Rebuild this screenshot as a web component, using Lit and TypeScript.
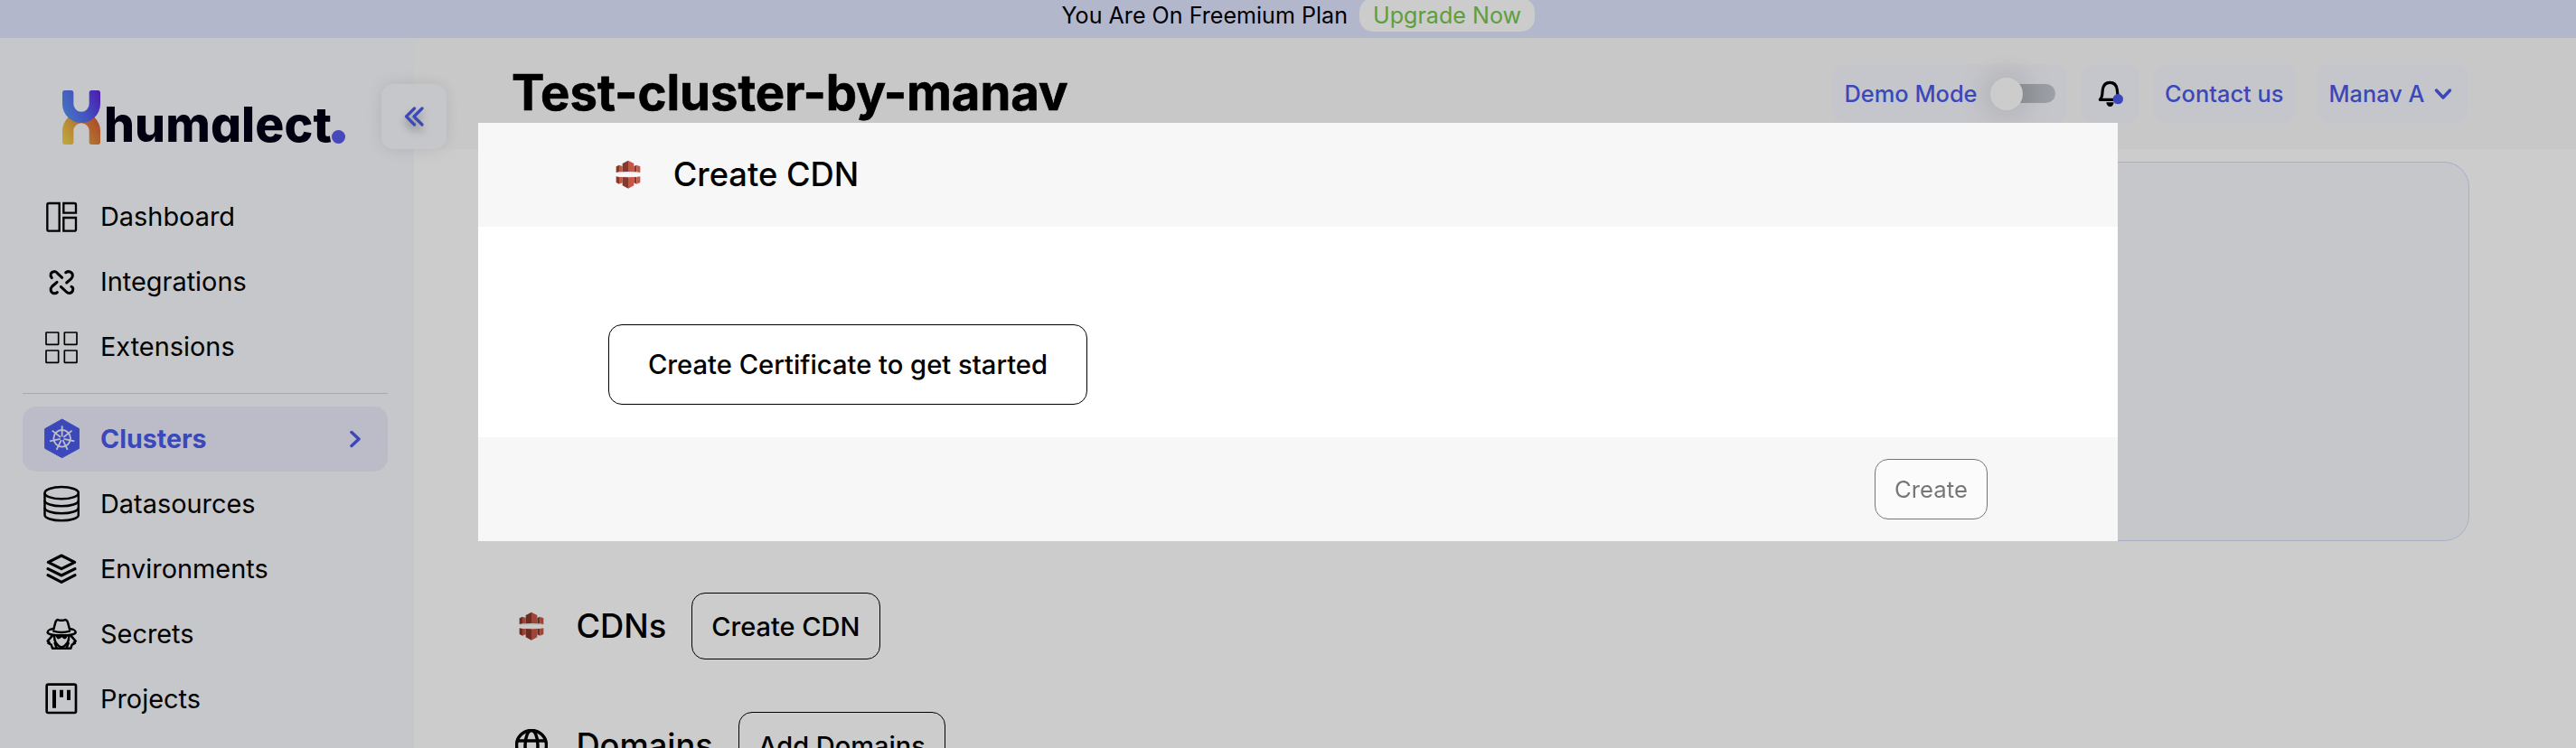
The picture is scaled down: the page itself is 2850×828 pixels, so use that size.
import { LitElement, html, css, svg, nothing } from 'lit';
import { customElement, property } from 'lit/decorators.js';

const navIcon = (y: number, body: unknown) =>
  html`<svg width="40" height="48" viewBox="24 ${y} 120 144" fill="none" stroke="#000">${body}</svg>`;

const wheelSpokes = Array.from({ length: 7 }, (_, i) => {
  const a = (i * 2 * Math.PI) / 7 - Math.PI / 2;
  return svg`<path d="M${86 + 6 * Math.cos(a)} ${91 + 6 * Math.sin(a)}L${86 + 42 * Math.cos(a)} ${91 + 42 * Math.sin(a)}"/>`;
});

const icons = {
  dashboard: navIcon(18, svg`<g stroke-width="7">
    <path d="M77 45V137H42Q37 137 37 132V50Q37 45 42 45Z"/>
    <path d="M91 45H127Q132 45 132 50V77H91Z"/>
    <path d="M91 93H132V132Q132 137 127 137H91Z"/></g>`),
  integrations: navIcon(234, svg`<g stroke-width="9" stroke-linecap="round" stroke-linejoin="round">
    <path d="M52 293C44 283 49 273 59 272C64 271 68 274 71 278L86 292"/>
    <path d="M98 275C109 268 121 274 121 285C121 290 119 293 116 296L101 309"/>
    <path d="M69 307L53 321C46 328 47 340 57 344C62 345 67 344 70 341"/>
    <path d="M82 322L100 339C107 346 121 345 122 332C123 327 120 323 117 322"/></g>`),
  extensions: navIcon(450, svg`<g stroke-width="5">
    <rect x="33" y="474" width="41" height="40" rx="1"/><rect x="94" y="474" width="41" height="40" rx="1"/>
    <rect x="33" y="534" width="41" height="40" rx="1"/><rect x="94" y="534" width="41" height="40" rx="1"/></g>`),
  clusters: navIcon(21, svg`<path d="M86 27L143 59V124L86 155L29 124V59Z" fill="#4a5be9" stroke="#4a5be9" stroke-width="3" stroke-linejoin="round"/>
    <g stroke="#ececfb" stroke-width="5.500"><circle cx="86" cy="91" r="28"/>${wheelSpokes}</g>`),
  datasources: navIcon(237, svg`<g stroke-width="7.500">
    <ellipse cx="84.500" cy="272" rx="56" ry="20"/>
    <path d="M28.500 272V345C28.500 356 54 364 84.500 364S140.500 356 140.500 345V272"/>
    <path d="M28.500 297C28.500 308 54 316 84.500 316S140.500 308 140.500 297"/>
    <path d="M28.500 321C28.500 332 54 340 84.500 340S140.500 332 140.500 321"/></g>`),
  environments: navIcon(453, svg`<g stroke-width="9.500" stroke-linejoin="round" stroke-linecap="round">
    <path d="M84 480L128 502L84 524L40 502Z"/><path d="M39 524L84 546L129 524"/><path d="M39 545L84 568L129 545"/></g>`),
  secrets: navIcon(669, svg`<g stroke-width="7.500" stroke-linejoin="round" stroke-linecap="round">
    <path d="M58 724L64 702C66 695 70 692 75 694C81 696 87 696 93 694C98 692 103 695 105 702L111 724"/>
    <path d="M57 724C48 724 38 728 38 735C38 741 56 745 84.500 745S131 741 131 735C131 728 121 724 112 724"/>
    <path d="M58 731C75 736 94 736 111 731"/>
    <path d="M54 746L38 764L44 769L40 771L50 776L54 788H115L119 776L129 771L125 769L131 764L115 746"/>
    <path d="M60 748C60 765 68 779 84.500 785C101 779 109 765 109 748"/>
    <path d="M62 771L68 787M107 771L101 787"/></g>
    <path d="M64 746H105L99 756Q92 760 85 751Q77 760 70 756Z" fill="#000" stroke="none"/>`),
  projects: navIcon(885, svg`<rect x="35" y="908" width="97" height="94" rx="5" stroke-width="8"/>
    <g fill="#000" stroke="none"><path d="M54 926H66V986H54ZM78 926H90V950H78ZM102 926H114V960H102Z"/></g>`),
};

const half = svg`
  <path fill="#85392c" d="M42 74L52 69V92L42 94Z"/><path fill="#c95546" d="M52 69L63 73V92L52 92Z"/>
  <path fill="#85392c" d="M101 73L110 69V92L101 92Z"/><path fill="#c95546" d="M110 69L122 74V94L110 92Z"/>
  <path fill="#85392c" d="M63 64L82 54V91L63 92Z"/><path fill="#c95546" d="M82 54L101 64V92L82 91Z"/>`;
const cdnIcon = html`<svg width="36" height="36" viewBox="28 46 108 108">
  <path fill="#ececec" d="M42 94L63 92H101L122 94V96H42ZM42 106H122V108H42Z"/>
  ${half}<g transform="matrix(1 0 0 -1 0 201)">${half}</g></svg>`;
const globeIcon = html`<svg width="36" height="36" viewBox="0 0 36 36" fill="none" stroke="#000" stroke-width="3.500">
  <circle cx="18" cy="18" r="16.500"/><ellipse cx="18" cy="18" rx="7" ry="16.500"/><path d="M3 13H33M3 23H33"/></svg>`;

@customElement('nav-item')
class NavItem extends LitElement {
  @property() label = '';
  @property({ type: Boolean, reflect: true }) active = false;
  @property({ attribute: false }) icon: unknown = nothing;
  static styles = css`
    :host { display: flex; align-items: center; height: 72px; padding: 0 30px 0 23px; border-radius: 15px; font-size: 28.9px; color: #000; box-sizing: border-box; }
    :host([active]) { background: #ececfb; color: #4a5be9; font-weight: 700; font-size: 28.6px; }
    .label { margin: 0 0 2px 23px; flex: 1; white-space: nowrap; }
    svg { display: block; }
  `;
  render() {
    return html`${this.icon}<span class="label">${this.label}</span>${this.active
      ? html`<svg width="12" height="20" viewBox="0 0 12 20" fill="none" stroke="#4a5be9" stroke-width="3.500" stroke-linecap="round" stroke-linejoin="round"><path d="M2 2.500L10 10L2 17.500"/></svg>`
      : nothing}`;
  }
}

@customElement('app-root')
class AppRoot extends LitElement {
  static styles = css`
    :host { display: block; position: relative; width: 2850px; height: 828px; overflow: hidden; background: #fff; color: #000; font-family: Inter, sans-serif; }
    * { box-sizing: border-box; }
    svg { display: block; flex: none; }
    button { font: inherit; color: inherit; margin: 0; white-space: nowrap; }
    .banner { display: flex; align-items: flex-start; height: 42px; padding-left: 1174.5px; background: #e0e5fe; font-size: 25.1px; line-height: 35px; white-space: nowrap; overflow: hidden; }
    .upgrade { display: grid; place-items: center; width: 194px; height: 37px; padding-top: 2px; margin: -2px 0 0 13px; border-radius: 15px; background: #fff; color: #76c74a; }
    .shell { display: flex; height: 786px; }
    .sidebar { width: 458px; padding: 58px 29px 0 25px; background: #f8f9fe; position: relative; }
    .logo { display: flex; height: 60px; margin: 0 0 44px 44px; align-items: flex-start; }
    .word { font-size: 53.5px; font-weight: 800; line-height: 60px; margin: 7.5px 0 0 4px; color: #010114; font-feature-settings: "cv11" 1; width: 250px; letter-spacing: 0.1px; }
    .dot { width: 15px; height: 15px; border-radius: 50%; background: #5a5ce8; margin: 43.5px 0 0 2px; }
    .collapse { position: absolute; left: 422px; top: 51px; width: 72px; height: 72px; border: 0; border-radius: 14px; background: #f8f9fe; box-shadow: 0 0 18px rgba(0,0,0,.1); display: grid; place-items: center; padding: 0; z-index: 1; }
    .collapse svg { filter: drop-shadow(0 6px 4px rgba(0,0,0,.3)); }
    .divider { height: 1px; background: #d2d3d9; margin: 15px 0 14px; }
    .main { flex: 1; min-width: 0; }
    .header { display: flex; align-items: center; height: 123px; padding: 0 119px 0 108px; background: #fbfbfb; }
    h1 { margin: 0 auto 3px 0; font-size: 54.4px; font-weight: 700; line-height: 66px; white-space: nowrap; -webkit-text-stroke: 0.7px #000; }
    .chip { display: flex; align-items: center; height: 65px; border-radius: 14px; background: #f7f8fe; color: #4a5be9; font-size: 25.4px; font-weight: 500; white-space: nowrap; }
    .demo { width: 260px; padding-left: 13.5px; }
    .switch { display: flex; align-items: center; width: 69px; height: 21px; margin-left: 17px; border-radius: 11px; background: linear-gradient(90deg, #b3babd 30%, #c5c8d2); }
    .thumb { flex: none; width: 36px; height: 36px; border-radius: 50%; background: #fff; box-shadow: 0 0 36px rgba(0,0,0,.22); margin-left: -3px; }
    .bell { width: 65px; margin-left: 15px; padding-left: 19px; }
    .contact { width: 158px; margin-left: 15px; padding-left: 13px; }
    .user { width: 167px; margin-left: 24px; padding-left: 12.5px; gap: 11px; font-size: 25.3px; }
    .content { padding: 14px 118px 0 109px; }
    .card { height: 420px; border: 1px solid #d3daf8; border-radius: 28px; background: #f8f9fe; margin-bottom: 57px; }
    .section { display: flex; align-items: center; height: 74px; margin: 0 0 58px 2.7px; }
    h2 { margin: 0; font-size: 36.3px; font-weight: 500; line-height: 44px; white-space: nowrap; }
    .section h2 { margin: 0 27.7px 0 31.7px; }
    .btn { border: 1px solid #000; border-radius: 15px; background: #fff; font-size: 29px; font-weight: 500; height: 74px; padding: 0 21.4px; }
    .backdrop { position: absolute; inset: 0; z-index: 2; background: rgba(0,0,0,.2); padding: 136px 0 0 529px; }
    .modal { width: 1814px; height: 463px; background: #fff; display: flex; flex-direction: column; }
    .m-head { display: flex; align-items: center; height: 115px; background: #f7f7f7; padding: 0 0 1px 147.7px; }
    .m-head h2 { margin-left: 32px; }
    .m-body { height: 233px; padding: 108px 0 0 144px; }
    .m-body .btn { width: 530px; height: 89px; font-size: 29.2px; padding: 0; }
    .m-foot { display: flex; align-items: center; justify-content: flex-end; height: 115px; background: #f7f7f7; padding-right: 144px; }
    .m-foot .btn { width: 125px; height: 67px; padding: 0 0 1px; opacity: .52; font-size: 25.7px; font-weight: 400; }
  `;

  render() {
    return html`
      <div class="banner"><span>You Are On Freemium Plan</span><span class="upgrade">Upgrade Now</span></div>
      <div class="shell">
        <nav class="sidebar">
          <div class="logo">
            <svg width="42" height="60" viewBox="87 60 126 180">
              <defs>
                <linearGradient id="b" x1="0" y1=".6" x2="1" y2=".2"><stop offset="0" stop-color="#5590f2"/><stop offset=".5" stop-color="#5566f0"/><stop offset="1" stop-color="#5d28df"/></linearGradient>
                <linearGradient id="o" x1="0" y1=".2" x2="1" y2=".7"><stop offset="0" stop-color="#edd04b"/><stop offset=".5" stop-color="#e2963b"/><stop offset="1" stop-color="#d75a36"/></linearGradient>
              </defs>
              <path transform="matrix(1 0 0 -1 0 300)" fill="url(#o)" d="M95 60h21q8 0 8 8v37a26 26 0 0 0 52 0V68q0-8 8-8h21q8 0 8 8v37a63 63 0 0 1-126 0V68q0-8 8-8z"/>
              <path fill="url(#b)" d="M95 60h21q8 0 8 8v37a26 26 0 0 0 52 0V68q0-8 8-8h21q8 0 8 8v37a63 63 0 0 1-126 0V68q0-8 8-8z"/>
            </svg>
            <span class="word">humalect</span><span class="dot"></span>
          </div>
          <button class="collapse" aria-label="Collapse sidebar">
            <svg width="22" height="22" viewBox="0 0 22 22" fill="none" stroke="#4a5be9" stroke-width="3.200" stroke-linecap="round" stroke-linejoin="round"><path d="M11.500 2L2.500 11L11.500 20M20 2L11 11L20 20"/></svg>
          </button>
          <nav-item label="Dashboard" .icon=${icons.dashboard}></nav-item>
          <nav-item label="Integrations" .icon=${icons.integrations}></nav-item>
          <nav-item label="Extensions" .icon=${icons.extensions}></nav-item>
          <div class="divider"></div>
          <nav-item label="Clusters" active .icon=${icons.clusters}></nav-item>
          <nav-item label="Datasources" .icon=${icons.datasources}></nav-item>
          <nav-item label="Environments" .icon=${icons.environments}></nav-item>
          <nav-item label="Secrets" .icon=${icons.secrets}></nav-item>
          <nav-item label="Projects" .icon=${icons.projects}></nav-item>
        </nav>
        <main class="main">
          <header class="header">
            <h1>Test-cluster-by-manav</h1>
            <div class="chip demo">Demo Mode<span class="switch"><span class="thumb"></span></span></div>
            <div class="chip bell">
              <svg width="30" height="30" viewBox="393 55 90 90" fill="none">
                <path d="M400 119C409 112 407 100 409 86C411 70 420 62 433 62S455 70 457 86C459 100 457 112 466 119Z" stroke="#000" stroke-width="9.500" stroke-linejoin="round"/>
                <path d="M421 128H446Q444 142 433.500 142T421 128Z" fill="#000"/>
                <circle cx="460" cy="117" r="17" fill="#4a5be9"/>
              </svg>
            </div>
            <div class="chip contact">Contact us</div>
            <div class="chip user">Manav A
              <svg width="20" height="14" viewBox="0 0 20 14" fill="none" stroke="#4a5be9" stroke-width="3.500" stroke-linecap="round" stroke-linejoin="round"><path d="M2.500 3L10 11L17.500 3"/></svg>
            </div>
          </header>
          <div class="content">
            <div class="card"></div>
            <div class="section">${cdnIcon}<h2>CDNs</h2><button class="btn">Create CDN</button></div>
            <div class="section">${globeIcon}<h2>Domains</h2><button class="btn">Add Domains</button></div>
          </div>
        </main>
      </div>
      <div class="backdrop">
        <div class="modal" role="dialog">
          <div class="m-head">${cdnIcon}<h2>Create CDN</h2></div>
          <div class="m-body"><button class="btn">Create Certificate to get started</button></div>
          <div class="m-foot"><button class="btn" disabled>Create</button></div>
        </div>
      </div>
    `;
  }
}
